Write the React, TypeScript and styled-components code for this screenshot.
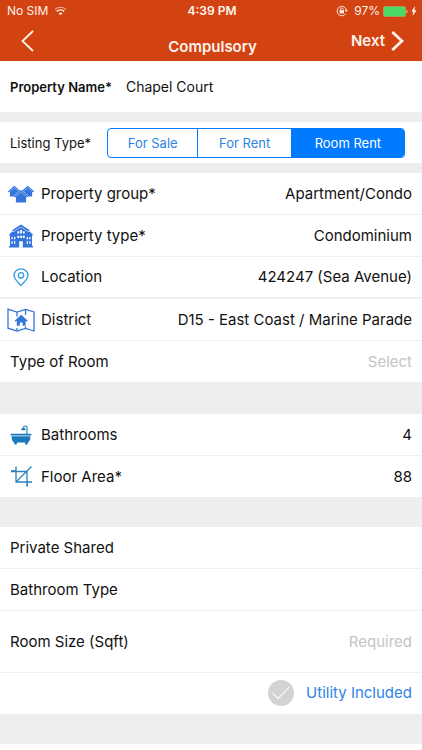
import { useState } from "react";
import styled, { createGlobalStyle } from "styled-components";

const colors = {
  header: "#d34312",
  headerText: "#fff3ec",
  page: "#eeeeee",
  white: "#ffffff",
  line: "#efefef",
  text: "#111111",
  muted: "#c4c4c9",
  primary: "#007aff",
  link: "#2d84e6",
  icon: "#3375db",
  bath: "#1b78ba",
  battery: "#4cd964",
};

const listingTypes = ["For Sale", "For Rent", "Room Rent"];

function WifiIcon() {
  return (
    <svg width="13" height="10" viewBox="0 0 13 10" fill="none" stroke="currentColor">
      <path d="M1 3.4C4.1.5 8.9.5 12 3.4" strokeWidth="1.2" opacity="0.6" />
      <path d="M2.8 5.4c2.1-1.9 5.3-1.9 7.4 0" strokeWidth="1.5" />
      <path d="M6.5 9.2 4.6 7.2c1.1-.9 2.7-.9 3.8 0z" fill="currentColor" stroke="none" />
    </svg>
  );
}

function RotationLockIcon() {
  return (
    <svg width="12" height="12" viewBox="0 0 12 12" fill="none" stroke="currentColor">
      <path d="M9.8 8.6A4.7 4.7 0 1 1 10.4 5" strokeWidth="0.9" />
      <path d="M8.9 4.9h3L10.4 7z" fill="currentColor" stroke="none" />
      <rect x="3.6" y="5.2" width="4.4" height="3.2" fill="currentColor" stroke="none" />
      <path d="M4.5 5.4V4.3a1.3 1.3 0 0 1 2.6 0v1.1" strokeWidth="0.8" />
    </svg>
  );
}

function BatteryIcon() {
  return (
    <svg width="25" height="11" viewBox="0 0 25 11">
      <rect x="0.5" y="0.5" width="22" height="10" rx="1.6" fill={colors.battery} stroke="#a9a766" strokeWidth="0.7" />
      <path d="M23.5 3.7c1.2.4 1.2 3.2 0 3.6z" fill="currentColor" />
    </svg>
  );
}

function BoltIcon() {
  return (
    <svg width="6" height="10" viewBox="0 0 6 10">
      <path d="M4.2 0 .3 5.4h2L1.6 10l4-5.8H3.4z" fill="currentColor" />
    </svg>
  );
}

function GroupIcon() {
  return (
    <svg width="28" height="18" viewBox="0 0 28 18" fill={colors.icon}>
      <path d="M1 6.200 7.300.8l6.300 5.400-1 1.200-.8-.6V11.500H2.900V6.800l-.9.600z" />
      <path d="M14.400 6.200 20.700.8 27 6.200l-1 1.200-.9-.6v4.700h-8.900V6.800l-.8.600z" />
      <path
        d="M6.800 11.200 14 5l7.200 6.200-1.200 1.300-.9-.7v5.700H8.900v-5.700l-.9.700z"
        stroke={colors.white}
        strokeWidth="0.9"
        paintOrder="stroke"
      />
      <g fill="none" stroke="#b4cef5" strokeWidth="0.6">
        <path d="m2.800 6.500 4.500-3.900 3.800 3.300M16.900 5.900l3.800-3.300 4.500 3.900M8.700 11.600 14 7l5.300 4.600" />
      </g>
    </svg>
  );
}

function BuildingIcon() {
  return (
    <svg width="26" height="24" viewBox="0 0 26 24">
      <g fill={colors.icon}>
        <path d="M13 .5 21.500 6v2L13 2.800 4.500 8V6z" />
        <path d="M13 3.300 19.800 7.500V23H6.200V7.500z" />
        <path d="M2 10h4.500v13H2zM19.500 10H24v13h-4.500z" />
        <path d="M.5 11.300 3.800 8H7v3.300zM25.500 11.300 22.200 8H19v3.300z" />
        <path d="M1 22h24v1.500H1z" />
      </g>
      <g fill={colors.white}>
        <path d="M9.300 7.300h1.900v2.300H9.300zM12.100 6h1.800v3.600h-1.800zM14.800 7.300h1.900v2.300h-1.900z" />
        <path d="M9.300 11.700h1.900V14H9.300zM12.100 11.700h1.800V14h-1.800zM14.800 11.700h1.900V14h-1.900z" />
        <path d="M3.400 13h1.300v2.300H3.400zM6 13h1.300v2.300H6zM18.700 13H20v2.300h-1.300zM21.300 13h1.300v2.300h-1.300z" />
        <path d="M3.400 17.300h1.300v2.500H3.400zM6 17.300h1.300v2.500H6zM18.700 17.300H20v2.500h-1.300zM21.300 17.300h1.300v2.500h-1.300z" />
        <path d="M11.200 17.200h3.600v6.500h-3.600z" />
      </g>
    </svg>
  );
}

function PinIcon() {
  return (
    <svg width="16" height="19" viewBox="0 0 16 19" fill="none" stroke="#3299e2" strokeWidth="1.300">
      <path d="M8 17.500C5.600 14.600 1 11 1 7.500a7 6.700 0 0 1 14 0c0 3.500-4.600 7.100-7 10z" />
      <circle cx="8" cy="7.300" r="2.700" />
    </svg>
  );
}

function MapIcon() {
  return (
    <svg width="28" height="24" viewBox="0 0 28 24" fill="none" stroke={colors.icon} strokeWidth="1.300">
      <path d="M1 1.200 10 4l8.500-2.500L27 4v19l-8.500-2.500L10 23l-9-2.800z" />
      <path d="M10 4v4.500M18.500 1.500V7M10 20v3M18.500 18.500v2" />
      <path d="m14.200 6.800 6.500 6-.8 1-1.300-1v5h-3v-3.400h-2.800v3.400h-3v-5l-1.300 1-.8-1z" fill={colors.icon} stroke="none" />
    </svg>
  );
}

function BathIcon() {
  return (
    <svg width="22" height="20" viewBox="0 0 22 20" fill={colors.bath}>
      <path d="M17 9V2.600c0-2.200-3.300-2.200-3.600 0" fill="none" stroke={colors.bath} strokeWidth="1.100" />
      <path d="M11.300 5.200c0-3.300 4.300-3.300 4.300 0z" />
      <rect x="0.500" y="8.800" width="21" height="1.800" rx="0.900" />
      <path d="M1.600 11.200h18.800c0 4-1.300 6.300-3.500 6.300H5.100c-2.200 0-3.500-2.300-3.500-6.300z" />
      <path d="M4 17h3.200l-.6 2.500H4.500zM14.800 17H18l-.5 2.500h-2.200z" />
    </svg>
  );
}

function CropIcon() {
  return (
    <svg width="21" height="21" viewBox="0 0 21 21" fill="none" stroke="#2b83bd" strokeWidth="1.300">
      <path d="M0 5.500h16v15M5 .5V16h16M5 16 20.500.5" />
      <path d="M0 4.500h5M16.500 16v4.500" strokeWidth="0.800" />
    </svg>
  );
}

function App() {
  const [name, setName] = useState("Chapel Court");
  const [listingType, setListingType] = useState("Room Rent");
  const [bathrooms, setBathrooms] = useState("4");
  const [floorArea, setFloorArea] = useState("88");
  const [roomSize, setRoomSize] = useState("");
  const [utility, setUtility] = useState(false);

  return (
    <Page>
      <GlobalStyle />
      <Header>
        <StatusBar>
          <StatusGroup>
            No SIM
            <WifiIcon />
          </StatusGroup>
          <Clock>4:39 PM</Clock>
          <StatusGroup $end>
            <RotationLockIcon />
            97%
            <BatteryGroup>
              <BatteryIcon />
              <BoltIcon />
            </BatteryGroup>
          </StatusGroup>
        </StatusBar>
        <NavBar>
          <NavButton type="button" aria-label="Back">
            <svg width="13" height="22" viewBox="0 0 13 22" fill="none" stroke="currentColor" strokeWidth="1.800">
              <path d="M12 1 1.500 11 12 21" />
            </svg>
          </NavButton>
          <Title>Compulsory</Title>
          <NavButton type="button" $end>
            Next
            <svg width="13" height="20" viewBox="0 0 13 20" fill="none" stroke="currentColor" strokeWidth="2.800">
              <path d="m1.300 1 9.700 9-9.700 9" />
            </svg>
          </NavButton>
        </NavBar>
      </Header>

      <main>
        <NameRow>
          <NameLabel htmlFor="name">Property Name*</NameLabel>
          <NameInput id="name" value={name} onChange={(e) => setName(e.target.value)} />
        </NameRow>

        <ListingRow>
          <legend>Listing Type*</legend>
          <Segments>
            {listingTypes.map((type) => (
              <Segment key={type}>
                <HiddenInput
                  type="radio"
                  name="listing"
                  checked={listingType === type}
                  onChange={() => setListingType(type)}
                />
                {type}
              </Segment>
            ))}
          </Segments>
        </ListingRow>

        <Section $gap={32}>
          <RowButton type="button">
            <IconBox><GroupIcon /></IconBox>
            <span>Property group*</span>
            <Value>Apartment/Condo</Value>
          </RowButton>
          <RowButton type="button">
            <IconBox><BuildingIcon /></IconBox>
            <span>Property type*</span>
            <Value>Condominium</Value>
          </RowButton>
          <RowButton type="button" $thickLine>
            <IconBox><PinIcon /></IconBox>
            <span>Location</span>
            <Value>424247 (Sea Avenue)</Value>
          </RowButton>
          <RowButton type="button">
            <IconBox><MapIcon /></IconBox>
            <span>District</span>
            <Value>D15 - East Coast / Marine Parade</Value>
          </RowButton>
          <RowButton type="button">
            <span>Type of Room</span>
            <Value $muted>Select</Value>
          </RowButton>
        </Section>

        <Section $gap={30}>
          <Row>
            <IconBox><BathIcon /></IconBox>
            <label htmlFor="bathrooms">Bathrooms</label>
            <RowInput
              id="bathrooms"
              inputMode="numeric"
              value={bathrooms}
              onChange={(e) => setBathrooms(e.target.value)}
            />
          </Row>
          <Row>
            <IconBox><CropIcon /></IconBox>
            <label htmlFor="area">Floor Area*</label>
            <RowInput
              id="area"
              inputMode="numeric"
              value={floorArea}
              onChange={(e) => setFloorArea(e.target.value)}
            />
          </Row>
        </Section>

        <Section $gap={30}>
          <RowButton type="button">Private Shared</RowButton>
          <RowButton type="button">Bathroom Type</RowButton>
          <Row $tall>
            <label htmlFor="size">Room Size (Sqft)</label>
            <RowInput
              id="size"
              inputMode="numeric"
              placeholder="Required"
              value={roomSize}
              onChange={(e) => setRoomSize(e.target.value)}
            />
          </Row>
          <UtilityRow>
            <UtilityLabel>
              <HiddenInput type="checkbox" checked={utility} onChange={(e) => setUtility(e.target.checked)} />
              <CheckCircle>
                <svg width="18" height="14" viewBox="0 0 18 14" fill="none" stroke="#f4f4f4" strokeWidth="1.300">
                  <path d="m.7 7.200 5.300 5.300L17.300 1" />
                </svg>
              </CheckCircle>
              Utility Included
            </UtilityLabel>
          </UtilityRow>
        </Section>
      </main>
    </Page>
  );
}

const GlobalStyle = createGlobalStyle`
  * {
    box-sizing: border-box;
  }

  body {
    margin: 0;
    background-color: ${colors.white};
    color: ${colors.text};
    font-family: Inter, "Liberation Sans", sans-serif;
    font-size: 15px;
    line-height: 20px;
  }

  button,
  input {
    font: inherit;
    color: inherit;
    border: none;
    background: none;
  }

  svg {
    display: block;
    flex-shrink: 0;
  }
`;

const Page = styled.div`
  display: flex;
  flex-direction: column;
`;

const Header = styled.header`
  background-color: ${colors.header};
  color: ${colors.headerText};
`;

const StatusBar = styled.div`
  display: grid;
  grid-template-columns: 1fr auto 1fr;
  align-items: center;
  padding: 1px 5px 0 7px;
  font-size: 12px;
`;

const StatusGroup = styled.div<{ $end?: boolean }>`
  display: flex;
  align-items: center;
  justify-content: ${({ $end }) => ($end ? "flex-end" : "flex-start")};
  gap: 6px;
`;

const BatteryGroup = styled.span`
  display: flex;
  align-items: center;
  gap: 3px;
  margin-left: -3px;
`;

const Clock = styled.div`
  font-weight: 600;
`;

const NavBar = styled.div`
  display: grid;
  grid-template-columns: 1fr auto 1fr;
  align-items: start;
  height: 40px;
  padding: 8px 18px 0 21px;
`;

const NavButton = styled.button<{ $end?: boolean }>`
  display: flex;
  align-items: center;
  justify-self: ${({ $end }) => ($end ? "end" : "start")};
  gap: 6px;
  height: 24px;
  padding: 0;
  font-weight: 600;
`;

const Title = styled.h1`
  margin: 0;
  padding-top: 8px;
  font-size: 15px;
  font-weight: 600;
`;

const NameRow = styled.div`
  display: flex;
  align-items: center;
  height: 51px;
  padding: 0 10px;
  gap: 14px;
  font-size: 14px;
`;

const NameLabel = styled.label`
  font-size: 13px;
  font-weight: 600;
`;

const NameInput = styled.input`
  flex: 1;
  min-width: 0;
  padding: 0;
`;

const ListingRow = styled.fieldset`
  display: flex;
  align-items: center;
  min-width: 0;
  margin: 0;
  padding: 6px 17px 5px 10px;
  border: solid ${colors.page};
  border-width: 10px 0;
  font-size: 13px;

  legend {
    float: left;
    width: 97px;
    padding: 0;
  }
`;

const Segments = styled.div`
  flex: 1;
  display: grid;
  grid-template-columns: 90fr 94fr 114fr;
  border: 1px solid ${colors.primary};
  border-radius: 4px;
  overflow: hidden;
`;

const Segment = styled.label`
  padding: 4px 0;
  color: ${colors.link};
  text-align: center;
  cursor: pointer;

  & + & {
    border-left: 1px solid ${colors.primary};
  }

  &:has(input:checked) {
    background-color: ${colors.primary};
    color: ${colors.white};
  }
`;

const HiddenInput = styled.input`
  position: absolute;
  width: 1px;
  height: 1px;
  margin: 0;
  opacity: 0;
`;

const Section = styled.section<{ $gap: number }>`
  border-bottom: ${({ $gap }) => $gap}px solid ${colors.page};
`;

const Row = styled.div<{ $tall?: boolean; $thickLine?: boolean }>`
  display: flex;
  align-items: center;
  width: 100%;
  height: ${({ $tall }) => ($tall ? 62 : 42)}px;
  padding: 0 10px;
  border-bottom: ${({ $thickLine }) => ($thickLine ? 2 : 1)}px solid ${colors.line};
  white-space: nowrap;
  text-align: left;

  &:last-child {
    height: 41px;
    border-bottom: none;
  }
`;

const RowButton = styled(Row).attrs({ as: "button" })<{ type?: "button" }>`
  cursor: pointer;
`;

const IconBox = styled.span`
  display: flex;
  justify-content: center;
  width: 28px;
  margin: 0 6px 0 -3px;
`;

const Value = styled.span<{ $muted?: boolean }>`
  margin-left: auto;
  color: ${({ $muted }) => ($muted ? colors.muted : colors.text)};
`;

const RowInput = styled.input`
  flex: 1;
  min-width: 0;
  padding: 0;
  text-align: right;

  &::placeholder {
    color: ${colors.muted};
    opacity: 1;
  }
`;

const UtilityRow = styled.div`
  display: flex;
  justify-content: flex-end;
  padding: 7px 10px 8px;
`;

const UtilityLabel = styled.label`
  display: flex;
  align-items: center;
  gap: 12px;
  color: ${colors.link};
  cursor: pointer;
`;

const CheckCircle = styled.span`
  display: flex;
  align-items: center;
  justify-content: center;
  width: 26px;
  height: 26px;
  border-radius: 50%;
  background-color: #d2d4d4;

  input:checked + & {
    background-color: ${colors.primary};
  }
`;

export default App;
